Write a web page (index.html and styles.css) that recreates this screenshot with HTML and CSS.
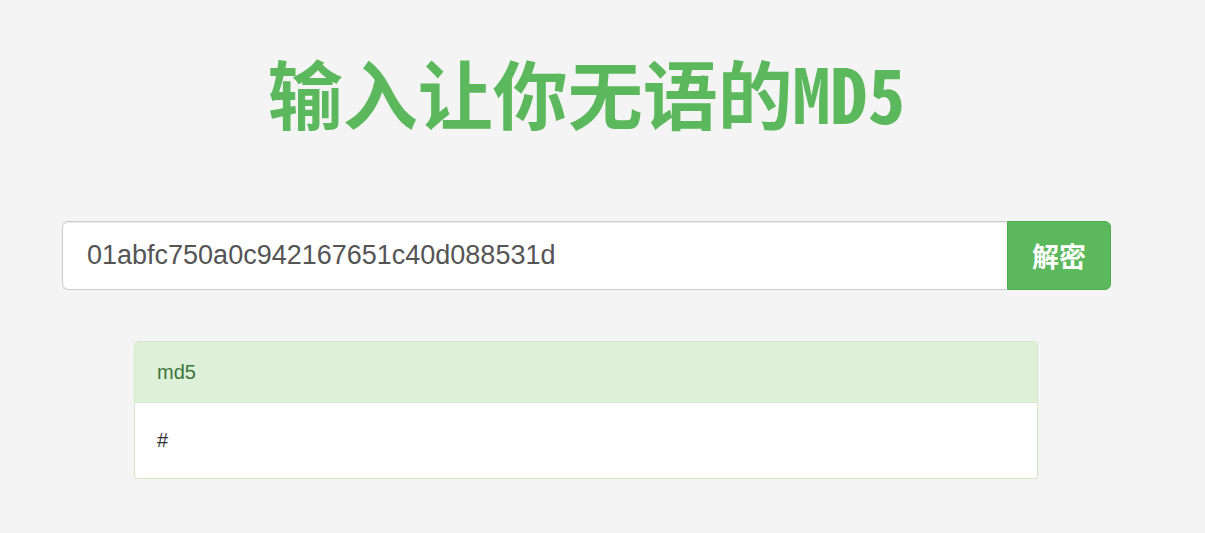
FILE: index.html
```html
<!DOCTYPE html>
<html lang="zh-CN">
<head>
    <meta charset="UTF-8">
    <meta name="viewport" content="width=device-width, initial-scale=1.0">
    <title>输入让你无语的MD5</title>
    <link rel="stylesheet" href="styles.css">
</head>
<body>
    <div class="container">
        <h1 class="title">输入让你无语的MD5</h1>

        <form class="search-form">
            <div class="input-group">
                <input type="text" class="form-control" value="01abfc750a0c942167651c40d088531d">
                <button type="submit" class="btn-decrypt">解密</button>
            </div>
        </form>

        <div class="panel">
            <div class="panel-heading">md5</div>
            <div class="panel-body">#</div>
        </div>
    </div>
</body>
</html>
```

FILE: styles.css
```css
body {
    margin: 0;
    font-family: "Liberation Sans", Arial, "Noto Sans CJK SC", sans-serif;
    font-size: 14px;
    line-height: 1.42857;
    color: #333;
    background-color: #f4f4f4;
}
.container {
    width: 1049px;
    margin-left: 62px;
    padding-top: 46px;
}
.title {
    margin: 0;
    text-align: center;
    font-family: "Noto Sans Mono CJK SC", "Noto Sans CJK SC", monospace;
    font-size: 75px;
    font-weight: 700;
    line-height: 92px;
    color: #5cb85c;
}
.search-form {
    margin-top: 83px;
}
.input-group {
    display: flex;
    height: 69px;
}
.form-control {
    flex: 1;
    min-width: 0;
    box-sizing: border-box;
    height: 69px;
    padding: 0 24px;
    font-family: "Liberation Sans", Arial, sans-serif;
    font-size: 27px;
    color: #555;
    background-color: #fff;
    border: 1px solid #ccc;
    border-right: none;
    border-radius: 6px 0 0 6px;
    box-shadow: inset 0 1px 1px rgba(0, 0, 0, 0.075);
    outline: none;
}
.btn-decrypt {
    width: 104px;
    height: 69px;
    padding: 0;
    font-family: "Noto Sans CJK SC", sans-serif;
    font-size: 27px;
    font-weight: 700;
    color: #fff;
    background-color: #5cb85c;
    border: 1px solid #4cae4c;
    border-radius: 0 6px 6px 0;
    cursor: pointer;
}
.panel {
    width: 904px;
    box-sizing: border-box;
    margin: 51px 0 0 72px;
    background-color: #fff;
    border: 1px solid #d6e9c6;
    border-radius: 4px;
    box-shadow: 0 1px 1px rgba(0, 0, 0, 0.05);
}
.panel-heading {
    height: 61px;
    box-sizing: border-box;
    padding: 18px 22px;
    font-size: 20px;
    line-height: 24px;
    color: #3c763d;
    background-color: #dff0d8;
    border-bottom: 1px solid #d6e9c6;
    border-radius: 3px 3px 0 0;
}
.panel-body {
    height: 75px;
    box-sizing: border-box;
    padding: 25px 22px;
    font-size: 20px;
    line-height: 24px;
}
```
